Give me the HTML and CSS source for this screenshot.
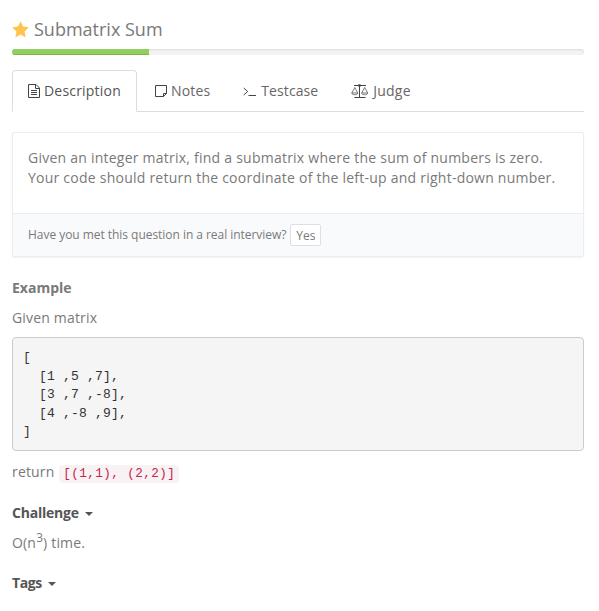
FILE: index.html
```html
<!DOCTYPE html>
<html lang="en">
<head>
<meta charset="utf-8">
<title>Submatrix Sum</title>
<link rel="stylesheet" href="styles.css">
</head>
<body>
<main class="page">
  <h1 class="title">
    <svg class="star" viewBox="0 0 17 17"><path d="M8.5 .3 11 5.6 16.8 6.3 12.6 10.5 13.6 16.4 8.5 13.6 3.4 16.4 4.4 10.5 .2 6.3 6 5.6Z"/></svg>
    <span>Submatrix Sum</span>
  </h1>
  <div class="progress"><div class="progress-bar"></div></div>
  <nav class="tabs">
    <a class="tab active">
      <svg class="icon doc" viewBox="0 0 12 14"><path d="M.5.5H8L11.5 4V13.5H.5ZM7.5.5V4.5H11.5M3 6.5H9M3 8.5H9M3 10.5H9"/></svg>
      <span>Description</span>
    </a>
    <a class="tab">
      <svg class="icon note" viewBox="0 0 12 12"><path d="M.5.5H11.5V8.5L8.5 11.5H.5ZM11.5 8.5H8.5V11.5"/></svg>
      <span>Notes</span>
    </a>
    <a class="tab testcase">
      <svg class="icon prompt" viewBox="0 0 14 10"><path d="M.7 1 4.7 4.5 .7 8M5.5 8.5H13"/></svg>
      <span>Testcase</span>
    </a>
    <a class="tab judge">
      <svg class="icon scales" viewBox="0 0 18 15"><path d="M3 1.5H15M8.5 2V14M3.5 13.5H14.5"/><circle cx="8.5" cy="1.5" r="1.1"/><path class="pans" d="M3.8 3.5 .8 9H6.8ZM13.7 3.5 10.7 9H16.7ZM.6 9C1.2 11.3 6.4 11.3 7 9M10.5 9C11.1 11.3 16.3 11.3 16.9 9"/></svg>
      <span>Judge</span>
    </a>
  </nav>
  <section class="card">
    <div class="card-body">Given an integer matrix, find a submatrix where the sum of numbers is zero.<br>Your code should return the coordinate of the left-up and right-down number.</div>
    <div class="card-footer"><span>Have you met this question in a real interview?</span><button class="yes">Yes</button></div>
  </section>
  <h2 class="heading">Example</h2>
  <p class="text">Given matrix</p>
  <pre class="matrix">[
  [1 ,5 ,7],
  [3 ,7 ,-8],
  [4 ,-8 ,9],
]</pre>
  <p class="text result">return <code class="code">[(1,1), (2,2)]</code></p>
  <h2 class="heading toggle">Challenge<i class="caret"></i></h2>
  <p class="text">O(n<sup>3</sup>) time.</p>
  <h2 class="heading toggle tags">Tags<i class="caret"></i></h2>
</main>
</body>
</html>
```
FILE: styles.css
```css
* { box-sizing: border-box; }
body {
  margin: 0;
  background: #fff;
  color: #797979;
  font: 14px/20px "Open Sans", sans-serif;
}
.page { width: 572px; margin-left: 12px; padding-top: 19px; }
.title {
  display: flex;
  align-items: center;
  gap: 5px;
  height: 20px;
  margin: 0 0 10px;
  font-size: 18px;
  font-weight: 400;
}
.star { width: 17px; height: 17px; fill: #ffc44d; }
.progress {
  height: 6px;
  border-radius: 3px;
  overflow: hidden;
  background: #f3f3f3;
  box-shadow: inset 0 1px 2px rgba(0, 0, 0, .1);
}
.progress-bar {
  width: 137px;
  height: 6px;
  background: #90d05c;
  box-shadow: inset 0 -1px 0 #7db352;
}
.tabs {
  display: flex;
  height: 42px;
  margin-top: 15px;
  border-bottom: 1px solid #ddd;
}
.tab {
  display: flex;
  align-items: center;
  gap: 4px;
  height: 42px;
  margin-right: 2px;
  padding: 0 15px;
  border: 1px solid transparent;
  color: #666;
  letter-spacing: .15px;
}
.tab.active {
  width: 125px;
  border-color: #ddd;
  border-bottom-color: #fff;
  border-radius: 4px 4px 0 0;
  background: #fff;
  color: #555;
  letter-spacing: .2px;
}
.testcase { padding-left: 14px; letter-spacing: .1px; }
.judge { padding-left: 14px; letter-spacing: .2px; }
.icon { flex: none; fill: none; stroke: #444; stroke-width: 1; }
.doc { width: 12px; height: 14px; }
.note { width: 12px; height: 12px; }
.prompt { width: 14px; height: 10px; margin-top: 1px; }
.scales { width: 18px; height: 15px; }
.pans { stroke-width: .7; }
.card {
  height: 125px;
  margin: 20px 0 21px;
  border: 1px solid #e9edf4;
  border-radius: 2px;
  box-shadow: 0 1px 2px rgba(0, 0, 0, .05);
}
.card-body { height: 80px; padding: 15px; letter-spacing: .236px; }
.card-footer {
  display: flex;
  align-items: center;
  gap: 4px;
  height: 43px;
  padding: 0 15px;
  border-top: 1px solid #e9edf4;
  background: #f9fafc;
  font-size: 12px;
  letter-spacing: -.04px;
}
.yes {
  width: 31px;
  height: 22px;
  padding: 1px 0 0;
  border: 1px solid #dcdfe6;
  border-radius: 2px;
  background: #fff;
  color: #797979;
  font: 12px/18px "Open Sans", sans-serif;
}
.heading { margin: 0 0 10px; font-size: 14px; font-weight: 700; }
.text { margin: 0 0 9px; letter-spacing: .17px; }
.matrix {
  height: 114px;
  margin: 0 0 11px;
  padding: 11px 10px 9px;
  border: 1px solid #ccc;
  border-radius: 4px;
  background: #f5f5f5;
  color: #333;
  font: 13px/18.57px "Liberation Mono", monospace;
  letter-spacing: .2px;
}
.code {
  margin-left: 1px;
  padding: 2px 4px;
  border-radius: 4px;
  background: #f9f2f4;
  color: #c7254e;
  font: 12.6px "Liberation Mono", monospace;
  letter-spacing: .44px;
}
.toggle { display: flex; align-items: center; margin-top: 21px; color: #555; letter-spacing: -.22px; }
.tags { margin-top: 20px; letter-spacing: -.4px; }
.caret {
  margin: 2px 0 0 6px;
  border: 4px solid transparent;
  border-top-color: #555;
  border-bottom: 0;
}
sup { position: relative; top: -.5em; font-size: 85%; line-height: 0; vertical-align: baseline; }
```
